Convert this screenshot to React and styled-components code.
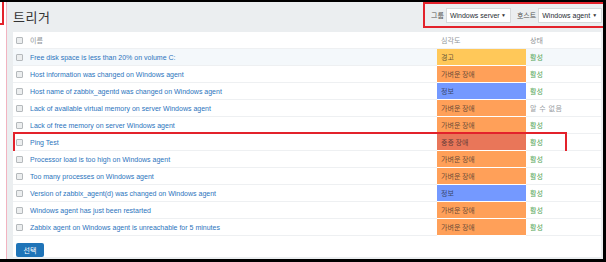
import React from "react";
import styled, { createGlobalStyle } from "styled-components";

const GlobalStyle = createGlobalStyle`
  html, body {
    margin: 0;
    padding: 0;
    background: #ffffff;
  }
  * {
    box-sizing: border-box;
  }
`;

const FONT = `"Liberation Sans", Arial, "Noto Sans CJK KR", sans-serif`;

const Screen = styled.div`
  width: 606px;
  height: 262px;
  display: flex;
  border-top: 2px solid #000;
  border-right: 3px solid #000;
  border-bottom: 3px solid #000;
  font-family: ${FONT};
  background: #fff;
`;

const Gutter = styled.div`
  width: 7px;
  flex-shrink: 0;
  border-right: 1px solid #f2b3c0;
`;

const Bracket = styled.div`
  width: 4px;
  height: 23px;
  border-right: 2px solid #e3222b;
  border-bottom: 2px solid #e3222b;
`;

const Main = styled.div`
  flex: 1;
  min-width: 0;
  display: flex;
  flex-direction: column;
  background: #ebeef0;
  padding-bottom: 2px;
`;

const Header = styled.div`
  height: 31px;
  display: flex;
  justify-content: space-between;
  align-items: flex-start;
  padding-left: 6px;
`;

const Title = styled.h1`
  margin: 5px 0 0;
  font-size: 13px;
  font-weight: normal;
  color: #333;
  font-family: "Noto Sans CJK KR", sans-serif;
  letter-spacing: 0.5px;
`;

const Filter = styled.div`
  width: 180px;
  height: 26px;
  flex-shrink: 0;
  display: flex;
  align-items: center;
  padding-left: 6px;
  border: 2px solid #e3222b;
  border-right: none;
  overflow: hidden;
`;

const Label = styled.span`
  flex-shrink: 0;
  white-space: nowrap;
  font-family: "Noto Sans CJK KR", sans-serif;
  font-size: 7px;
  color: #555;
  margin: 0 2px 0 ${({ $gap }) => $gap || 0}px;
`;

const Select = styled.div`
  flex-shrink: 0;
  height: 15px;
  width: ${({ $w }) => $w}px;
  display: flex;
  align-items: center;
  justify-content: space-between;
  padding: 0 4px 0 3px;
  background: #fff;
  border: 1px solid #d6d9db;
  font-size: 7px;
  color: #1f2c33;
  white-space: nowrap;
`;

const Caret = styled.span`
  font-size: 5px;
  color: #333;
`;

const Panel = styled.div`
  flex: 1;
  margin: 0 2px 0 6px;
  background: #fff;
  display: flex;
  flex-direction: column;
`;

const Row = styled.div`
  position: relative;
  height: 17px;
  display: grid;
  grid-template-columns: 17px 1fr 89px 75px;
  align-items: stretch;
  border-bottom: 1px solid #eef0f2;
  background: ${({ $hover }) => ($hover ? "#f4f8fb" : "#fff")};

  ${({ $marked }) =>
    $marked &&
    `
    &::after {
      content: "";
      position: absolute;
      left: 0;
      top: -2px;
      width: 550px;
      height: 19px;
      border: 2px solid #e3222b;
      pointer-events: none;
    }
  `}
`;

const Cell = styled.div`
  display: flex;
  align-items: center;
  padding-left: ${({ $pad }) => $pad ?? 0}px;
  font-size: 7px;
  white-space: nowrap;
`;

const Check = styled.span`
  width: 7px;
  height: 7px;
  margin-left: 3px;
  border: 1px solid #b5b9bc;
  border-radius: 1px;
  background: #eceeef;
`;

const HeadText = styled.span`
  font-family: "Noto Sans CJK KR", sans-serif;
  font-size: 7px;
  color: #8f9497;
`;

const Name = styled.span`
  color: #2c74bd;
  font-size: 7px;
`;

const Severity = styled(Cell)`
  background: ${({ $bg }) => $bg};
  border-bottom: 1px solid #fff;
  margin-bottom: -1px;
  color: rgba(30, 30, 40, 0.72);
  font-family: "Noto Sans CJK KR", sans-serif;
  padding-left: 4px;
`;

const Status = styled(Cell)`
  font-family: "Noto Sans CJK KR", sans-serif;
  padding-left: 4px;
  color: ${({ $ok }) => ($ok ? "#52a556" : "#9aa0a4")};
  letter-spacing: ${({ $ok }) => ($ok ? 0 : 0.6)}px;
`;

const Footer = styled.div`
  flex: 1;
  padding: 3px 0 0 3px;
`;

const Button = styled.button`
  width: 28px;
  height: 14px;
  padding: 0;
  border: none;
  border-radius: 2px;
  background: #1f74b8;
  color: #fff;
  font-family: "Noto Sans CJK KR", sans-serif;
  font-size: 7px;
`;

const SEV = {
  warn: { label: "경고", bg: "#ffc859" },
  avg: { label: "가벼운 장애", bg: "#ffa059" },
  info: { label: "정보", bg: "#7499ff" },
  high: { label: "중증 장애", bg: "#e97659" },
};

const triggers = [
  { name: "Free disk space is less than 20% on volume C:", sev: "warn", ok: true, hover: true },
  { name: "Host information was changed on Windows agent", sev: "avg", ok: true },
  { name: "Host name of zabbix_agentd was changed on Windows agent", sev: "info", ok: true },
  { name: "Lack of available virtual memory on server Windows agent", sev: "avg", ok: false },
  { name: "Lack of free memory on server Windows agent", sev: "avg", ok: true },
  { name: "Ping Test", sev: "high", ok: true, marked: true },
  { name: "Processor load is too high on Windows agent", sev: "avg", ok: true },
  { name: "Too many processes on Windows agent", sev: "avg", ok: true },
  { name: "Version of zabbix_agent(d) was changed on Windows agent", sev: "info", ok: true },
  { name: "Windows agent has just been restarted", sev: "avg", ok: true },
  { name: "Zabbix agent on Windows agent is unreachable for 5 minutes", sev: "avg", ok: true },
];

const App = () => {
  return (
    <>
      <GlobalStyle />
      <Screen>
        <Gutter>
          <Bracket />
        </Gutter>
        <Main>
          <Header>
            <Title>트리거</Title>
            <Filter>
              <Label>그룹</Label>
              <Select $w={65}>
                Windows server <Caret>▼</Caret>
              </Select>
              <Label $gap={6}>호스트</Label>
              <Select $w={64}>
                Windows agent <Caret>▼</Caret>
              </Select>
            </Filter>
          </Header>
          <Panel>
            <Row>
              <Cell>
                <Check />
              </Cell>
              <Cell>
                <HeadText>이름</HeadText>
              </Cell>
              <Cell $pad={4}>
                <HeadText>심각도</HeadText>
              </Cell>
              <Cell $pad={4}>
                <HeadText>상태</HeadText>
              </Cell>
            </Row>
            {triggers.map((t) => (
              <Row key={t.name} $hover={t.hover} $marked={t.marked}>
                <Cell>
                  <Check />
                </Cell>
                <Cell>
                  <Name>{t.name}</Name>
                </Cell>
                <Severity $bg={SEV[t.sev].bg}>{SEV[t.sev].label}</Severity>
                <Status $ok={t.ok}>{t.ok ? "활성" : "알 수 없음"}</Status>
              </Row>
            ))}
            <Footer>
              <Button>선택</Button>
            </Footer>
          </Panel>
        </Main>
      </Screen>
    </>
  );
};

export default App;
